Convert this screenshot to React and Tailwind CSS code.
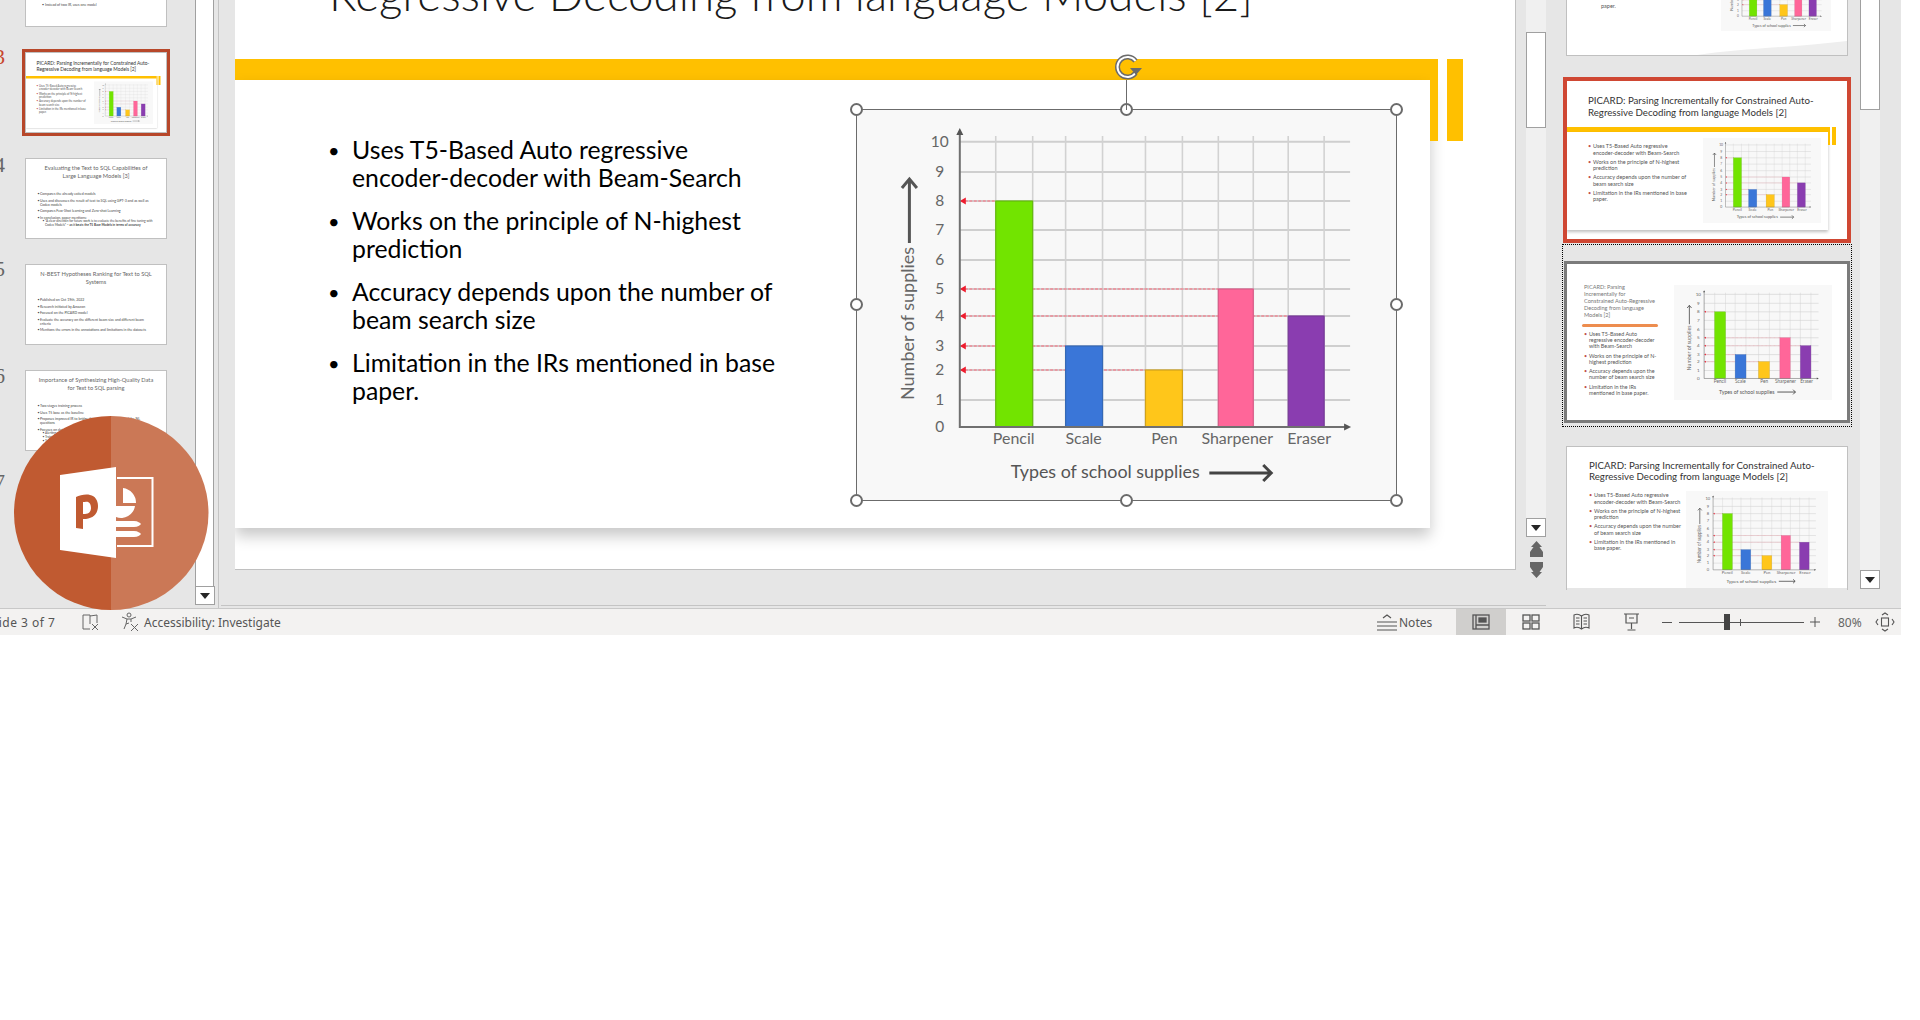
import React from 'react';

// Bars of the school supplies chart, in the 540x390 space of the picture
const bars = [
  { x: 139, w: 37, top: 91, fill: '#72e400', stroke: '#63b80c' },
  { x: 209, w: 37, top: 236, fill: '#3a76d8', stroke: '#3568b5' },
  { x: 289, w: 37, top: 260, fill: '#ffc61a', stroke: '#d0a21c' },
  { x: 362, w: 35, top: 179, fill: '#ff6699', stroke: '#d85c88' },
  { x: 432, w: 36, top: 206, fill: '#8a3db0', stroke: '#773a98' },
];
const gridY = [31.7, 62, 91, 120, 150, 179, 206, 236, 260, 290];
const gridX = [139, 176, 209, 246, 289, 326, 362, 397, 432, 468];
const ticks = [
  ['10', 32], ['9', 62], ['8', 91], ['7', 120], ['6', 150], ['5', 179],
  ['4', 206], ['3', 236], ['2', 260], ['1', 290], ['0', 317],
];
const names = [['Pencil', 157], ['Scale', 227], ['Pen', 308], ['Sharpener', 381], ['Eraser', 453]];
const guides = [[91, 139], [179, 362], [206, 432], [236, 209], [260, 289]];

const BarChart = ({ className }) => (
  <svg viewBox="0 0 540 390" preserveAspectRatio="none" className={`block bg-[#f8f8f8] ${className}`}>
    {gridY.map((y) => <line key={y} x1="103" x2="494" y1={y} y2={y} stroke="#cfcfcf" strokeWidth="2" />)}
    {gridX.map((x) => <line key={x} x1={x} x2={x} y1="26" y2="317" stroke="#d2d2d2" strokeWidth="1.6" />)}
    {guides.map(([y, end]) => (
      <g key={y}>
        <line x1="108" x2={end} y1={y} y2={y} stroke="#f08a96" strokeWidth="1.6" strokeDasharray="3 1.5" />
        <polygon points={`103,${y} 109,${y - 3.5} 109,${y + 3.5}`} fill="#ee1c2e" />
      </g>
    ))}
    {bars.map((b) => (
      <rect key={b.x} x={b.x} y={b.top} width={b.w} height={317 - b.top} fill={b.fill} stroke={b.stroke} strokeWidth="1.2" />
    ))}
    <path d="M103 21V317H491" fill="none" stroke="#707070" strokeWidth="2" />
    <path d="M103 18l-3.5 7h7zM495 317l-7-3.5v7z" fill="#555" />
    {ticks.map(([t, y]) => (
      <text key={t} x="83" y={y + 5} textAnchor="middle" fontSize="15.5" fill="#666">{t}</text>
    ))}
    {names.map(([n, x]) => (
      <text key={n} x={x} y="334" textAnchor="middle" fontSize="16" fill="#666">{n}</text>
    ))}
    <text x="154" y="368" fontSize="17.9" fill="#555">Types of school supplies</text>
    <path d="M353 363H415M407 355l8 8-8 8" fill="none" stroke="#444" strokeWidth="3" />
    <text transform="translate(57 290) rotate(-90)" fontSize="18" fill="#666">Number of supplies</text>
    <path d="M52.5 133V69M45 78l7.5-9 7.5 9" fill="none" stroke="#555" strokeWidth="3" />
  </svg>
);

const MiniBullets = ({ items, className }) => (
  <ul className={className}>
    {items.map((item, i) => (
      <li key={i} className="flex">
        <span className="w-[5px] shrink-0 -ml-[5px] text-[#c0504d]">•</span>
        <span>{item}</span>
      </li>
    ))}
  </ul>
);

const picardLines = [
  <>Uses T5-Based Auto regressive<br />encoder-decoder with Beam-Search</>,
  <>Works on the principle of N-highest<br />prediction</>,
  <>Accuracy depends upon the number of<br />beam search size</>,
  <>Limitation in the IRs mentioned in base<br />paper.</>,
];

// Slide 3 as the thumbnails show it: 280x158 box
const SlideOriginal = () => (
  <div className="w-[280px] h-[158px] bg-white overflow-hidden">
    <div className="h-[46px] pl-[21px] pt-[13px] text-[9.7px] leading-[12px] text-[#333] whitespace-nowrap">
      PICARD: Parsing Incrementally for Constrained Auto-<br />Regressive Decoding from language Models [2]
    </div>
    <div className="flex items-start">
      <div className="w-[261px]">
        <div className="h-[5px] bg-[#ffc000]" />
        <div className="h-[98px] flex shadow-[0_2px_3px_rgba(0,0,0,0.25)]">
          <MiniBullets
            items={picardLines}
            className="w-[136px] pl-[26px] pt-[11px] text-[5.5px] leading-[6.5px] text-[#555] flex flex-col gap-[2.5px] whitespace-nowrap"
          />
          <BarChart className="w-[118px] h-[85px] mt-[6px]" />
        </div>
      </div>
      <div className="w-[2px] h-[18px] bg-[#ffc000]" />
      <div className="w-[4px] h-[18px] ml-[2px] bg-[#ffc000]" />
    </div>
  </div>
);

// Slide with the title in a narrow column on the left
const SlideNarrow = () => (
  <div className="w-[280px] h-[156px] bg-white flex overflow-hidden">
    <div className="w-[107px] pl-[17px] pt-[19px]">
      <div className="text-[5.6px] leading-[7px] text-[#777] whitespace-nowrap">
        PICARD: Parsing<br />Incrementally for<br />Constrained Auto-Regressive<br />Decoding from language<br />Models [2]
      </div>
      <div className="h-[3px] w-[76px] -ml-[2px] mt-[6px] rounded-full bg-[#ed8d4f]" />
      <MiniBullets
        items={[
          <>Uses T5-Based Auto<br />regressive encoder-decoder<br />with Beam-Search</>,
          <>Works on the principle of N-<br />highest prediction</>,
          <>Accuracy depends upon the<br />number of beam search size</>,
          <>Limitation in the IRs<br />mentioned in base paper.</>,
        ]}
        className="pl-[5px] mt-[4px] text-[5.4px] leading-[6px] text-[#555] flex flex-col gap-[3.5px] whitespace-nowrap"
      />
    </div>
    <BarChart className="w-[158px] h-[115px] mt-[21px]" />
  </div>
);

// Slide with a wide title and the chart below it, cut by the panel
const SlideWide = () => (
  <div className="w-[280px] bg-white">
    <div className="pl-[22px] pt-[13px] h-[44px] text-[9.7px] leading-[11px] text-[#333] whitespace-nowrap">
      PICARD: Parsing Incrementally for Constrained Auto-<br />Regressive Decoding from language Models [2]
    </div>
    <div className="flex">
      <MiniBullets
        items={[
          <>Uses T5-Based Auto regressive<br />encoder-decoder with Beam-Search</>,
          <>Works on the principle of N-highest<br />prediction</>,
          <>Accuracy depends upon the number<br />of beam search size</>,
          <>Limitation in the IRs mentioned in<br />base paper.</>,
        ]}
        className="w-[119px] pl-[27px] pt-[1px] text-[5.5px] leading-[6.5px] text-[#555] flex flex-col gap-[2.5px] whitespace-nowrap"
      />
      <BarChart className="w-[142px] h-[97px]" />
    </div>
  </div>
);

// Plain text slides of the left panel, drawn at 280x158 then halved
const TextSlide = ({ title, items, sub = [] }) => (
  <div className="w-[280px] h-[158px] bg-white overflow-hidden">
    <div className="h-[65px] pt-[10px] px-[10px] text-center text-[11.4px] leading-[16px] text-[#666] whitespace-nowrap">{title}</div>
    <ul className="pl-[28px] pr-[24px] text-[7px] leading-[8px] text-[#444] flex flex-col gap-[5px]">
      {items.map((item, i) => (
        <li key={i} className="flex">
          <span className="w-[5px] shrink-0 -ml-[5px]">•</span>
          <span>{item}</span>
        </li>
      ))}
      {sub.length > 0 && (
        <ul className="-mt-[5px] pl-[10px] -mr-[10px] text-[6.3px] leading-[8px]">
          {sub.map((item, i) => (
            <li key={i} className="flex">
              <span className="w-[5px] shrink-0 -ml-[5px]">•</span>
              <span>{item}</span>
            </li>
          ))}
        </ul>
      )}
    </ul>
  </div>
);

const Half = ({ children }) => (
  <div className="w-[140px] h-[79px] overflow-hidden">
    <div className="origin-top-left scale-50">{children}</div>
  </div>
);

const LeftRow = ({ n, active, top, children }) => (
  <div className="flex h-[81px] shrink-0">
    <div className={`w-[22px] -ml-[17px] shrink-0 text-right text-[21px] leading-[24px] [font-family:'Liberation_Serif',serif] ${top} ${active ? 'text-[#c8452d]' : 'text-[#666]'}`}>{n}</div>
    <div className={`ml-[20px] w-[142px] h-[81px] border border-[#c0c0c0] bg-white ${active ? 'outline-[3px] outline-[#b7472a]' : ''}`}>
      {children}
    </div>
  </div>
);

const ScrollDown = ({ className = '' }) => (
  <div className={`w-[20px] h-[19px] bg-white border border-[#a0a0a0] flex items-center justify-center shrink-0 ${className}`}>
    <svg width="10" height="6" viewBox="0 0 10 6"><path d="M0 0h10L5 6z" fill="#262626" /></svg>
  </div>
);

const Handle = ({ className }) => (
  <div className={`absolute w-[13px] h-[13px] rounded-full bg-white border-2 border-[#6b6b6b] ${className}`} />
);

const LeftPanel = () => (
  <div className="w-[195px] shrink-0 h-full overflow-hidden flex flex-col gap-[25px]">
    <div className="h-[27px] shrink-0 ml-[25px] w-[142px] bg-white border border-t-0 border-[#c0c0c0] overflow-hidden">
      <div className="pl-[16px] pt-[3px] text-[3.5px] leading-[4px] text-[#444] whitespace-nowrap">• Instead of two IR, uses one model</div>
    </div>
    <LeftRow n="3" active top="mt-[-7px]">
      <Half><SlideOriginal /></Half>
    </LeftRow>
    <LeftRow n="4" top="mt-[-5px]">
      <Half>
        <TextSlide
          title={<>Evaluating the Text to SQL Capabilities of<br />Large Language Models [3]</>}
          items={[
            'Compares the already exited models',
            'Uses and discusses the result of text to SQL using GPT-3 and as well as Codex models',
            'Compares Few-Shot learning and Zero-shot Learning',
            'In conclusion, paper mentions:',
          ]}
          sub={[
            <>“A clear direction for future work is to evaluate the benefits of fine tuning with Codex Models” <b>– as it beats the T5 Base Models in terms of accuracy</b></>,
          ]}
        />
      </Half>
    </LeftRow>
    <LeftRow n="5" top="mt-[-7px]">
      <Half>
        <TextSlide
          title={<>N-BEST Hypotheses Ranking for Text to SQL<br />Systems</>}
          items={[
            'Published on Oct 19th, 2022',
            'Research initiated by Amazon',
            'Focused on the PICARD model',
            'Evaluate the accuracy on the different beam size and different beam criteria',
            'Mentions the errors in the annotations and limitations in the datasets',
          ]}
        />
      </Half>
    </LeftRow>
    <LeftRow n="6" top="mt-[-6px]">
      <Half>
        <TextSlide
          title={<>Importance of Synthesizing High-Quality Data<br />for Text to SQL parsing</>}
          items={[
            'Two stages training process',
            'Uses T5 base as the baseline',
            'Proposes improved IR to bridge the gap between SQL and the NL questions',
            'Focuses on data quality:',
          ]}
          sub={['Alerting', 'Training', 'Testing']}
        />
      </Half>
    </LeftRow>
    <LeftRow n="7" top="mt-[-6px]">
      <Half><div className="w-[280px] h-[158px] bg-white" /></Half>
    </LeftRow>
  </div>
);

const LeftScrollbar = () => (
  <div className="w-[19px] shrink-0 h-[605px] flex flex-col">
    <div className="h-[587px] bg-white border-x border-[#a0a0a0]" />
    <ScrollDown className="w-[19px]" />
  </div>
);

const SlideCanvas = () => (
  <div className="w-[1281px] h-[570px] shrink-0 bg-white border-r border-b border-[#c0c0c0] overflow-hidden">
    <div className="h-[59px] flex">
      <div className="-mt-[30px] pl-[94px] text-[45.7px] leading-[48px] font-light text-[#1a1a1a] whitespace-nowrap">
        Regressive Decoding from language Models [2]
      </div>
    </div>
    <div className="flex items-start">
      <div className="w-[1195px] shrink-0">
        <div className="h-[21px] bg-[#ffc000]" />
        <div className="h-[448px] flex items-start shadow-[0_8px_14px_rgba(0,0,0,0.22)]">
          <ul className="w-[622px] shrink-0 pl-[97px] pt-[56px] flex flex-col gap-[15px] text-[24.8px] leading-[28px] text-black">
            {picardLines.map((line, i) => (
              <li key={i} className="flex">
                <span className="w-[24px] -ml-[4px] shrink-0 text-[20px]">•</span>
                <span className="whitespace-nowrap">{line}</span>
              </li>
            ))}
          </ul>
          <div className="relative w-[539px] h-[390px] mt-[30px] shrink-0 outline outline-[1px] outline-[#6b6b6b]">
            <BarChart className="w-[539px] h-[390px]" />
            <Handle className="-left-[7px] -top-[7px]" />
            <Handle className="left-[263px] -top-[7px]" />
            <Handle className="-right-[7px] -top-[7px]" />
            <Handle className="-left-[7px] top-[188px]" />
            <Handle className="-right-[7px] top-[188px]" />
            <Handle className="-left-[7px] -bottom-[7px]" />
            <Handle className="left-[263px] -bottom-[7px]" />
            <Handle className="-right-[7px] -bottom-[7px]" />
            <div className="absolute left-[269px] -top-[30px] w-px h-[30px] bg-[#6b6b6b]" />
            <svg className="absolute left-[256px] -top-[58px]" width="32" height="30" viewBox="0 0 32 30">
              <path d="M22.5 21a10 10 0 1 1 0-12" fill="none" stroke="#6b6b6b" strokeWidth="5" />
              <path d="M22.5 21a10 10 0 1 1 0-12" fill="none" stroke="#fff" strokeWidth="2" />
              <path d="M17 16h12l-6 7z" fill="#6b6b6b" />
            </svg>
          </div>
        </div>
      </div>
      <div className="w-[8px] h-[82px] bg-[#ffc000] shrink-0" />
      <div className="w-[16px] h-[82px] ml-[9px] bg-[#ffc000] shrink-0" />
    </div>
  </div>
);

const MainArea = () => (
  <div className="w-[1328px] shrink-0 h-full ml-[4px] border-l border-[#c4c4c4] pl-[2px]">
    <div className="w-[1326px] h-[606px] border-r border-b border-[#c4c4c4] flex pl-[14px]">
      <SlideCanvas />
      <div className="w-[20px] ml-[10px] flex flex-col items-center">
        <div className="w-[20px] h-[537px] shrink-0 flex flex-col bg-[#f0f0f0]">
          <div className="w-[20px] h-[96px] mt-[32px] bg-white border border-[#a0a0a0] shrink-0" />
          <div className="grow" />
          <ScrollDown />
        </div>
        <svg className="mt-[4px]" width="13" height="37" viewBox="0 0 13 37">
          <path d="M6.5 0L12 6H9.5L13 11v5H0v-5l3.5-5H1z" fill="#666" />
          <path d="M0 21h13v5l-3.5 5H12l-5.5 6L1 31h2.5L0 26z" fill="#666" />
        </svg>
      </div>
    </div>
  </div>
);

const RightPanel = () => (
  <div className="w-[354px] shrink-0 h-full bg-[#e6e6e6] flex">
    <div className="w-[314px] h-[590px] overflow-hidden flex flex-col items-start">
      <div className="relative ml-[20px] w-[282px] h-[56px] shrink-0 bg-white border border-t-0 border-[#c0c0c0] overflow-hidden flex">
        <div className="w-[154px] shrink-0 pl-[34px] text-[5.5px] leading-[6px] pt-[3px] text-[#555]">paper.</div>
        <BarChart className="w-[110px] h-[79px] -mt-[48px]" />
        <svg className="absolute left-0 bottom-0" width="280" height="16" viewBox="0 0 280 16" preserveAspectRatio="none">
          <path d="M130 16C170 10 230 8 280 2V16z" fill="#eeeeee" />
        </svg>
      </div>
      <div className="mt-[21px] ml-[17px] w-[288px] h-[166px] shrink-0 border-[4px] border-[#cf4733]">
        <SlideOriginal />
      </div>
      <div className="mt-[1px] ml-[16px] w-[290px] h-[183px] shrink-0 border border-dotted border-black pt-[16px] pl-[1px]">
        <div className="w-[286px] h-[162px] border-[3px] border-[#7b7b7b]">
          <SlideNarrow />
        </div>
      </div>
      <div className="mt-[19px] ml-[20px] w-[282px] h-[144px] shrink-0 border border-b-0 border-[#c0c0c0] overflow-hidden">
        <SlideWide />
      </div>
    </div>
    <div className="w-[20px] h-[589px] bg-[#f0f0f0] flex flex-col">
      <div className="w-[20px] h-[110px] bg-white border border-t-0 border-[#a0a0a0]" />
      <div className="grow" />
      <ScrollDown />
    </div>
  </div>
);

const StatusBar = () => (
  <div className="w-[1901px] h-[27px] shrink-0 border-t border-[#c8c8c8] bg-[#f3f2f1] flex items-center text-[12px] text-[#555] [font-family:'Noto_Sans',sans-serif]">
    <span className="-ml-[12px] pt-[1px] w-[93px] shrink-0 whitespace-nowrap tracking-[0.5px]">Slide 3 of 7</span>
    <svg width="18" height="18" viewBox="0 0 18 18" fill="none" stroke="#666" strokeWidth="1">
      <path d="M9 16H2V2h7v9M9 3l7-1v8M11 11l6 6M17 11l-6 6" />
    </svg>
    <svg className="ml-[22px]" width="20" height="20" viewBox="0 0 20 20" fill="none" stroke="#666" strokeWidth="1">
      <circle cx="8" cy="3" r="2" />
      <path d="M1 5l5 2h4l5-2M6 7l-1 5-2 5M10 7l0 3M5 12l3-1M10 12l7 7M17 12l-7 7" />
    </svg>
    <span className="ml-[3px] pt-[1px] whitespace-nowrap">Accessibility: Investigate</span>
    <div className="grow" />
    <svg width="22" height="18" viewBox="0 0 22 18" fill="none" stroke="#555" strokeWidth="1.2">
      <path d="M7 5l4-3 4 3M1 9h20M1 13h20M1 17h20" />
    </svg>
    <span className="ml-[1px] pt-[1px] w-[57px] shrink-0">Notes</span>
    <div className="w-[50px] h-full bg-[#d0cfcd] flex items-center justify-center shrink-0">
      <svg width="18" height="16" viewBox="0 0 18 16" fill="none" stroke="#555" strokeWidth="1.3">
        <rect x="1" y="1" width="16" height="14" />
        <path d="M4 1v14M4 11h13" />
        <rect x="7" y="4" width="7" height="4" fill="#555" />
      </svg>
    </div>
    <div className="w-[50px] flex justify-center shrink-0">
      <svg width="18" height="16" viewBox="0 0 18 16" fill="none" stroke="#555" strokeWidth="1.3">
        <rect x="1" y="1" width="7" height="6" /><rect x="10" y="1" width="7" height="6" />
        <rect x="1" y="9" width="7" height="6" /><rect x="10" y="9" width="7" height="6" />
      </svg>
    </div>
    <div className="w-[50px] flex justify-center shrink-0">
      <svg width="17" height="18" viewBox="0 0 17 18" fill="none" stroke="#555" strokeWidth="1.1">
        <path d="M8.5 3C6 1 3 1 1 2v13c2-1 5-1 7.5 1 2.5-2 5.5-2 7.5-1V2c-2-1-5-1-7.5 1zM8.5 3v13" />
        <path d="M3 5h3.5M3 8h3.5M3 11h3.5M10.5 5H14M10.5 8H14M10.5 11H14" />
      </svg>
    </div>
    <div className="w-[50px] flex justify-center shrink-0">
      <svg width="17" height="18" viewBox="0 0 17 18" fill="none" stroke="#555" strokeWidth="1.2">
        <path d="M1 1h15M3 1v9h11V1M8.5 10v6M4.5 17h8M6 5h5" />
      </svg>
    </div>
    <div className="w-[10px] h-px bg-[#555] ml-[6px] shrink-0" />
    <div className="relative w-[125px] h-px bg-[#555] ml-[7px] shrink-0">
      <div className="absolute left-[45px] -top-[8px] w-[6px] h-[16px] bg-[#444]" />
      <div className="absolute left-[61px] -top-[3px] w-px h-[7px] bg-[#555]" />
    </div>
    <svg className="ml-[6px] shrink-0" width="10" height="10" viewBox="0 0 10 10" stroke="#555" strokeWidth="1">
      <path d="M0 5h10M5 0v10" />
    </svg>
    <span className="ml-[18px] pt-[1px] w-[37px] shrink-0 text-[#666]">80%</span>
    <svg className="shrink-0" width="20" height="20" viewBox="0 0 20 20" fill="none" stroke="#555" strokeWidth="1.1">
      <rect x="6.5" y="6" width="7" height="8" />
      <path d="M7 3l3-2 3 2M7 17l3 2 3-2M3 7l-2 3 2 3M17 7l2 3-2 3" />
    </svg>
    <div className="w-[6px] shrink-0" />
  </div>
);

// PowerPoint splash logo that sits above the thumbnails
const SplashLogo = () => (
  <svg className="absolute left-[14px] top-[416px]" width="196" height="194" viewBox="14 416 196 194">
    <path d="M111 416a97 97 0 0 0 0 194z" fill="#c05a31" />
    <path d="M111 416a97.5 97 0 0 1 0 194z" fill="#cb7856" />
    <path d="M117 478H152.5V546H117" fill="none" stroke="#fff" strokeWidth="2" />
    <path d="M123 488a15 15 0 0 1 13 15h-13zM116 506h19a14 14 0 0 1-19 11z" fill="#fff" />
    <path d="M116 521h18c4 0 6 2 7 3-1 1-3 3-7 3h-18zM116 531h18c4 0 6 2 7 3-1 1-3 3-7 3h-18z" fill="#fff" />
    <path fillRule="evenodd" fill="#fff" d="M60 475L116 467V558L60 550z" />
    <path
      fillRule="evenodd"
      fill="#c05a31"
      d="M76 497c4-2 10-3 14-2 5 1 8 5 8 11 0 8-5 12-12 13l-3 0v10l-7-1zM83 502v12h2c4 0 6-3 6-6 0-4-2-7-6-6z"
    />
  </svg>
);

export default function App() {
  return (
    <div className="relative w-[1920px] h-[1020px] bg-white overflow-hidden [font-family:Lato,sans-serif]">
      <div className="w-[1901px] h-[635px] flex flex-col">
        <div className="h-[608px] shrink-0 bg-[#e6e6e6] flex overflow-hidden">
          <LeftPanel />
          <LeftScrollbar />
          <MainArea />
          <RightPanel />
        </div>
        <StatusBar />
      </div>
      <SplashLogo />
    </div>
  );
}
